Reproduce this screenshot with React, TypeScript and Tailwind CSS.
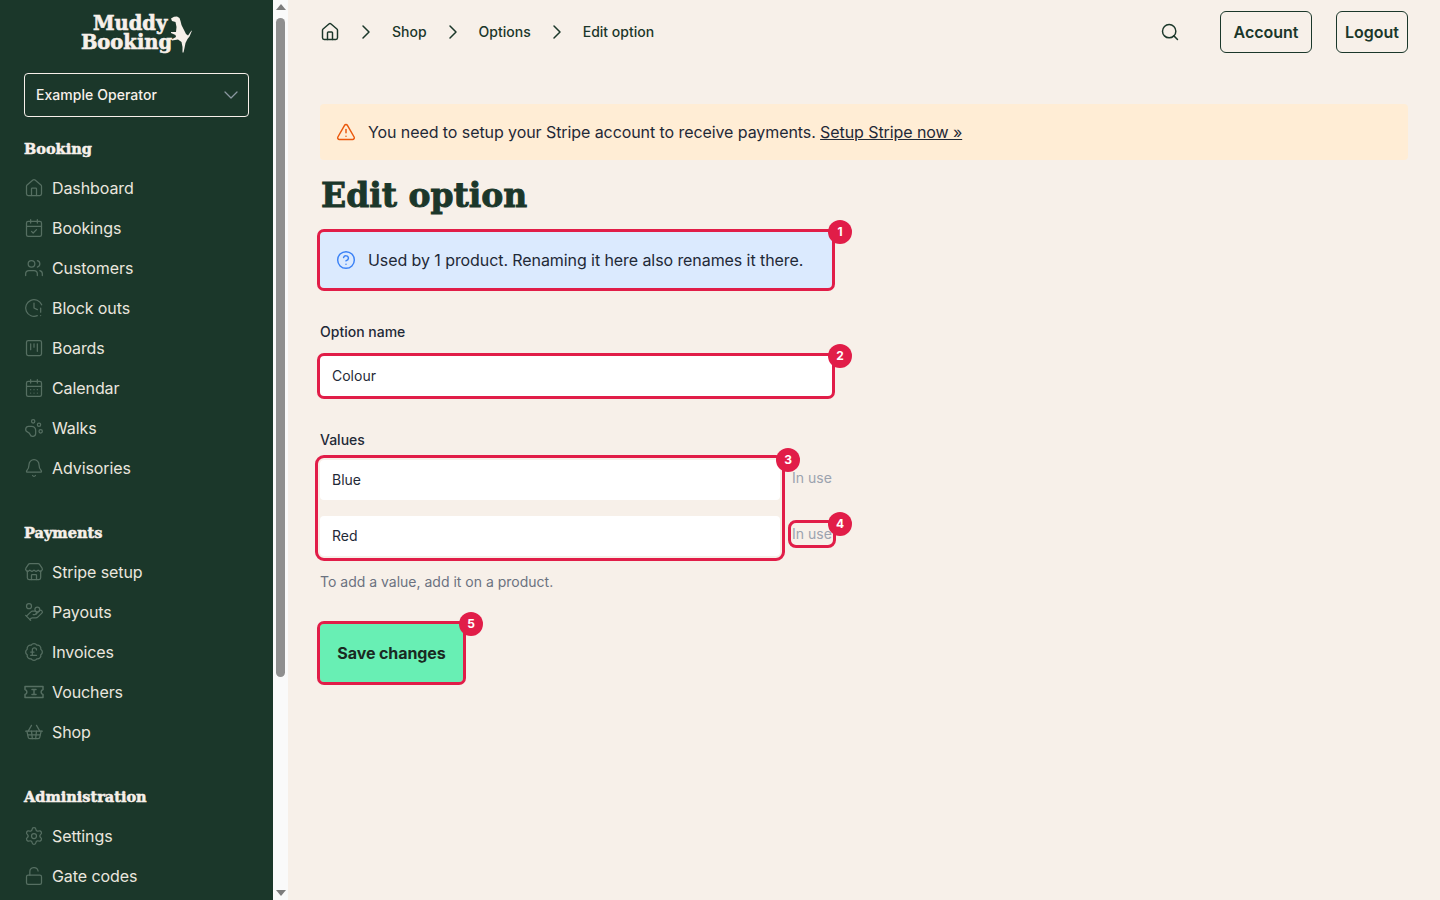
import React from "react";
import {
  House, CalendarCheck, Users, ClockAlert, SquareKanban, CalendarDays, PawPrint, Bell,
  Store, HandCoins, BadgePoundSterling, ShoppingBasket, Settings, LockOpen,
  ChevronDown, ChevronRight, Search, TriangleAlert, CircleHelp,
} from "lucide-react";

function TicketIcon() {
  return (
    <svg width="20" height="20" viewBox="0 0 20 20" fill="none" stroke="currentColor" strokeWidth="1.5" strokeLinejoin="round" strokeLinecap="round" className="shrink-0">
      <path d="M1 4.5h18v3a2.6 2.6 0 0 0 0 5v3H1v-3a2.6 2.6 0 0 0 0-5z" />
      <path d="M8 7.5h4M8 12.5h4M10 7.5v5" />
    </svg>
  );
}

const I = { size: 22, strokeWidth: 1.5 };

const groups = [
  { title: "Booking", items: [
    ["Dashboard", <House {...I} />],
    ["Bookings", <CalendarCheck {...I} />],
    ["Customers", <Users {...I} />],
    ["Block outs", <ClockAlert {...I} />],
    ["Boards", <SquareKanban {...I} />],
    ["Calendar", <CalendarDays {...I} />],
    ["Walks", <PawPrint {...I} />],
    ["Advisories", <Bell {...I} />],
  ] },
  { title: "Payments", items: [
    ["Stripe setup", <Store {...I} />],
    ["Payouts", <HandCoins {...I} />],
    ["Invoices", <BadgePoundSterling {...I} />],
    ["Vouchers", <TicketIcon />],
    ["Shop", <ShoppingBasket {...I} />],
  ] },
  { title: "Administration", items: [
    ["Settings", <Settings {...I} />],
    ["Gate codes", <LockOpen {...I} />],
  ] },
] as const;

const display = "font-['DejaVu_Serif',serif] font-bold";

function Badge({ n, className = "-right-5" }: { n: number; className?: string }) {
  return (
    <span className={`absolute -top-3 z-10 flex h-6 w-6 items-center justify-center rounded-full bg-[#e11d48] text-xs font-bold text-white ${className}`}>
      {n}
    </span>
  );
}

function Marked({ n, className = "", children }: { n: number; className?: string; children: React.ReactNode }) {
  return (
    <div className={`relative rounded outline-3 outline-[#e11d48] ${className}`}>
      {children}
      <Badge n={n} />
    </div>
  );
}

function Logo() {
  return (
    <div className="flex h-[73px] items-start justify-center pt-[15px]">
      <div className="flex items-start">
        <div className={`${display} text-[19.5px] leading-[18.5px] text-[#f7f0ea] [-webkit-text-stroke:0.6px_#f7f0ea]`}>
          <div className="ml-[12px]">Muddy</div>
          <div>Booking</div>
        </div>
        <svg width="22" height="37" viewBox="0 0 22 37" fill="#f7f0ea" className="-ml-[2px] mt-[1px] shrink-0">
          <path d="M1 2.5 L4 0.8 L7 0.5 L9.5 2 L10.5 5 L11.5 9 L14 14 L16 18 L18 19.5 L21.5 14.5 L21.8 15 L19.5 20.5 L17.5 23 L15.5 27 L14.5 32 L13.5 36.5 L12.5 36.5 L12.5 31 L11.5 26 L8 23.5 L2 24.5 L1.5 23.5 L6 21 L5.5 19 L1 17 L1 16 L6 16 L6.5 11 L5.5 6 L2 5 Z" />
        </svg>
      </div>
    </div>
  );
}

function FakeScrollbar() {
  return (
    <div className="flex h-full w-[15px] shrink-0 flex-col items-center bg-[#fafafa]">
      <div className="mt-[4px] h-0 w-0 border-x-[5px] border-b-[6px] border-x-transparent border-b-[#7d7d7d]" />
      <div className="mt-[8px] h-[659px] w-[9px] rounded-full bg-[#8f8f8f]" />
      <div className="mb-[4px] mt-auto h-0 w-0 border-x-[5px] border-t-[6px] border-x-transparent border-t-[#7d7d7d]" />
    </div>
  );
}

function Sidebar() {
  return (
    <aside className="flex h-screen w-[288px] shrink-0">
      <div className="min-w-0 flex-1 overflow-hidden bg-[#1b372a]">
        <Logo />
        <div className="px-6">
          <button className="flex h-11 w-full items-center justify-between rounded border border-[#f7f0ea] pl-[11px] pr-[5px] text-sm font-medium tracking-[0.05px] text-[#f7f0ea]">
            <span>Example Operator</span>
            <ChevronDown size={24} strokeWidth={1.25} className="text-[#8b98a0]" />
          </button>
          {groups.map((g, i) => (
            <div key={g.title} className={i === 0 ? "mt-[19px]" : "mt-8"}>
              <h3 className={`${display} mb-2 h-6 text-[14.5px] leading-[26px] text-[#f7f0ea] [-webkit-text-stroke:0.5px_#f7f0ea]`}>{g.title}</h3>
              {g.items.map(([label, icon]) => (
                <a key={label} className="flex h-10 items-center gap-2 text-base tracking-[-0.09px] text-[#eae6df]">
                  <span className="flex h-5 w-5 shrink-0 items-center justify-center text-[#566f62]">{icon}</span>
                  {label}
                </a>
              ))}
            </div>
          ))}
        </div>
      </div>
      <FakeScrollbar />
    </aside>
  );
}

function TopBar() {
  return (
    <header className="flex h-[64px] items-center justify-between text-[#1b372a]">
      <nav className="flex items-center text-sm font-medium">
        <House size={20} strokeWidth={1.75} />
        <ChevronRight size={24} strokeWidth={1.5} className="ml-[14px]" />
        <span className="ml-[14px]">Shop</span>
        <ChevronRight size={24} strokeWidth={1.5} className="ml-[14px]" />
        <span className="ml-[14px]">Options</span>
        <ChevronRight size={24} strokeWidth={1.5} className="ml-[14px]" />
        <span className="ml-[14px]">Edit option</span>
      </nav>
      <div className="flex items-center">
        <Search size={20} strokeWidth={1.75} className="mr-10" />
        <button className="h-[42px] w-[92px] rounded-md border border-[#1b372a] text-base font-semibold">Account</button>
        <button className="ml-6 h-[42px] w-[72px] rounded-md border border-[#1b372a] text-base font-semibold">Logout</button>
      </div>
    </header>
  );
}

function InUse() {
  return <span className="block text-sm leading-5 text-[#9ca3af]">In use</span>;
}

export default function App() {
  return (
    <div className="flex h-screen overflow-hidden bg-[#f7f0e9] font-['Inter',sans-serif] text-[#1f2937]">
      <Sidebar />
      <main className="min-w-0 flex-1 px-8">
        <TopBar />
        <div className="mt-10 flex h-14 items-center gap-3 rounded bg-[#ffedd5] px-4 text-base tracking-[-0.08px]">
          <TriangleAlert size={20} strokeWidth={1.75} className="text-[#ea580c]" />
          <p>You need to setup your Stripe account to receive payments. <a className="underline">Setup Stripe now »</a></p>
        </div>
        <h1 className={`${display} mt-4 h-10 pl-px text-[33px] leading-10 text-[#1b372a] [-webkit-text-stroke:0.9px_#1b372a]`}>Edit option</h1>
        <Marked n={1} className="mt-4 w-[512px]">
          <div className="flex h-14 items-center gap-3 rounded bg-[#dbeafe] px-4 text-base tracking-[-0.08px]">
            <CircleHelp size={20} strokeWidth={1.75} className="text-[#3b82f6]" />
            <p>Used by 1 product. Renaming it here also renames it there.</p>
          </div>
        </Marked>
        <label className="mt-[34px] block text-sm font-medium leading-5">Option name</label>
        <Marked n={2} className="mt-[14px] w-[512px]">
          <div className="flex h-10 items-center rounded bg-white px-3 text-sm">Colour</div>
        </Marked>
        <label className="mt-[34px] block text-sm font-medium leading-5">Values</label>
        <div className="relative mt-[10px] w-[512px]">
          <div className="flex w-[460px] flex-col gap-4 rounded outline-3 outline-offset-2 outline-[#e11d48]">
            <div className="flex h-10 items-center rounded bg-white px-3 text-sm">Blue</div>
            <div className="flex h-10 items-center rounded bg-white px-3 text-sm">Red</div>
          </div>
          <Badge n={3} className="left-[456px]" />
          <div className="absolute left-[472px] top-[8px]"><InUse /></div>
          <div className="absolute left-[472px] top-[64px] w-10 rounded-sm outline-3 outline-offset-1 outline-[#e11d48]">
            <InUse />
            <Badge n={4} />
          </div>
        </div>
        <p className="mt-4 text-sm leading-5 text-[#6b7280]">To add a value, add it on a product.</p>
        <Marked n={5} className="mt-8 w-[143px]">
          <button className="h-[58px] w-full rounded bg-[#68efb4] text-base font-bold tracking-[-0.09px] text-[#1a2a22]">Save changes</button>
        </Marked>
      </main>
    </div>
  );
}
